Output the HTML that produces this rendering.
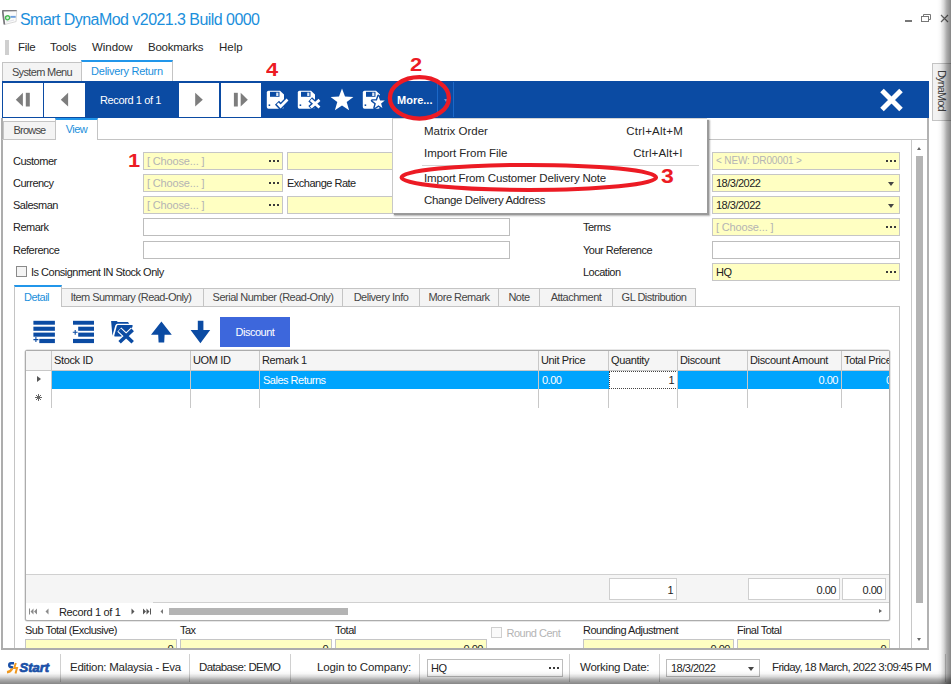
<!DOCTYPE html>
<html><head><meta charset="utf-8"><title>Smart DynaMod</title>
<style>
*{box-sizing:border-box;margin:0;padding:0}
html,body{width:951px;height:684px;overflow:hidden;background:#fff}
body{position:relative;font-family:"Liberation Sans",sans-serif;font-size:11px;color:#222;letter-spacing:-0.5px}
.a{position:absolute}
.t{position:absolute;white-space:nowrap;line-height:14px}
.m{font-size:11.500px;color:#262626;letter-spacing:-0.26px}
.y{position:absolute;background:#ffffc2;border:1px solid #c6c6c6;height:18px}
.w{position:absolute;background:#fff;border:1px solid #bdbdbd;height:18px}
.ph{color:#b4b4b4;letter-spacing:-0.15px}
.dots{position:absolute;right:11px;top:7px;width:2px;height:2px;background:#3a3a3a;box-shadow:4px 0 #3a3a3a,8px 0 #3a3a3a;font-size:0;overflow:hidden}
.dd{position:absolute;right:5px;top:7px;width:0;height:0;border-left:3.5px solid transparent;border-right:3.5px solid transparent;border-top:4px solid #444}
.tab{position:absolute;background:#f4f4f4;border:1px solid #c4c4c4;border-bottom:none;height:18px;line-height:16px;text-align:center;white-space:nowrap;color:#454545}
.nb{position:absolute;top:82.500px;height:34px;background:#fff}
.red{color:#ec1b24;font-weight:bold;font-size:19px;position:absolute;line-height:18px;letter-spacing:0;transform:scaleX(1.15);transform-origin:0 0}
.gh{position:absolute;top:351px;height:19px;border-right:1px solid #c8c8c8;background:#f5f5f5;line-height:18px;padding-left:2px;white-space:nowrap;overflow:hidden;color:#222;letter-spacing:-0.35px}
.vl{position:absolute;width:1px;background:#c8c8c8}
.sep{position:absolute;top:654px;width:1px;height:28px;background:#d0d0d0}
</style></head><body>

<!-- title -->
<svg class="a" style="left:2px;top:10px" width="16" height="16" viewBox="0 0 16 16"><path d="M.4 .7 L14.700 .5 L14.100 11.600 L2.300 14.600 Z" fill="#fbfbfb" stroke="#cfcfcf" stroke-width=".8"/><path d="M.3 .8 L14.700 .6" stroke="#7c7c80" stroke-width="1.500" fill="none"/><path d="M.600 .6 L2.400 14.500" stroke="#77777c" stroke-width="1.700" fill="none"/><ellipse cx="5.600" cy="7.800" rx="2.100" ry="2" fill="#d8f0da" stroke="#43b84f" stroke-width="1.300" transform="rotate(-20 5.600 7.800)"/><rect x="8.400" y="5.900" width="5.300" height="1.900" fill="#4c8ad6" opacity=".8"/><path d="M4 12 L12 10" stroke="#e2e2e8" stroke-width="1"/></svg>
<div class="t" style="left:20px;top:8.500px;font-size:16px;line-height:22px;color:#1b8fdc;letter-spacing:-0.55px">Smart DynaMod v2021.3 Build 0000</div>
<!-- window controls -->
<div class="a" style="left:905px;top:20px;width:7px;height:2px;background:#777"></div>
<svg class="a" style="left:920px;top:13px" width="12" height="10" viewBox="0 0 12 10"><path d="M3.5 3.5 V1.5 H10.5 V6.5 H8.5" fill="none" stroke="#777" stroke-width="1"/><rect x="1.5" y="3.5" width="7" height="5" fill="none" stroke="#777" stroke-width="1"/></svg>
<svg class="a" style="left:940px;top:14px" width="9" height="9" viewBox="0 0 9 9"><path d="M1 1 L8 8 M8 1 L1 8" stroke="#666" stroke-width="1.2"/></svg>

<!-- menu bar -->
<div class="a" style="left:5px;top:40px;width:4px;height:15px;background:#cfcfcf"></div>
<div class="t m" style="left:18px;top:40px">File</div>
<div class="t m" style="left:50px;top:40px;letter-spacing:-0.1px">Tools</div>
<div class="t m" style="left:92px;top:40px;letter-spacing:-0.05px">Window</div>
<div class="t m" style="left:148px;top:40px">Bookmarks</div>
<div class="t m" style="left:219px;top:40px;letter-spacing:0">Help</div>

<!-- document tabs -->
<div class="tab" style="left:2px;top:62px;width:80px;height:20px;line-height:19px;letter-spacing:-0.65px">System Menu</div>
<div class="tab" style="left:81px;top:59.500px;width:92px;height:22.500px;background:#fff;border-top:2px solid #2196ea;color:#1b8fdc;line-height:19px;letter-spacing:-0.27px">Delivery Return</div>

<!-- blue toolbar -->
<div class="a" style="left:2px;top:81px;width:926.500px;height:36.500px;background:#0b4ba3"></div>
<div class="nb" style="left:3px;width:39.500px"></div>
<div class="nb" style="left:44.400px;width:40.200px"></div>
<div class="nb" style="left:179px;width:40px"></div>
<div class="nb" style="left:221px;width:40px"></div>
<svg class="a" style="left:0;top:82px" width="262" height="35" viewBox="0 82 262 35"><g fill="#7d7d7d"><path d="M22.900 92.800 V106.500 L15.800 99.650Z"/><rect x="25.800" y="92.800" width="4" height="13.700"/><path d="M68.100 92.800 V106.500 L60.800 99.650Z"/><path d="M195.200 92.800 V106.500 L202.800 99.650Z"/><rect x="233.900" y="92.800" width="3.900" height="13.700"/><path d="M240.700 92.800 V106.500 L247.800 99.650Z"/></g></svg>
<div class="t" style="left:83.500px;top:93px;width:94px;text-align:center;color:#fff;letter-spacing:-0.4px">Record 1 of 1</div>


<!-- toolbar icons -->
<svg class="a" style="left:266px;top:90px" width="24" height="20" viewBox="0 0 24 20"><path d="M2.5 .8 H14 L18 4.5 V17 Q18 18.8 16.2 18.8 H2.5 Q.8 18.8 .8 17 V2.5 Q.8 .8 2.5 .8Z" fill="#fff"/><rect x="4" y="1.8" width="9.5" height="5" fill="#0b4ba3"/><rect x="10.2" y="2.6" width="2.2" height="3.4" fill="#dfe8f5"/><rect x="2.6" y="14.4" width="1.6" height="1.6" fill="#0b4ba3"/><path d="M11 12.800 L14.600 16.600 L22.200 8.800" fill="none" stroke="#0b4ba3" stroke-width="5.600"/><path d="M11.600 13.400 L14.600 16.500 L21.500 9.500" fill="none" stroke="#fff" stroke-width="2.700"/></svg>
<svg class="a" style="left:297px;top:90px" width="24" height="20" viewBox="0 0 24 20"><path d="M2.5 .8 H14 L18 4.5 V17 Q18 18.8 16.2 18.8 H2.5 Q.8 18.8 .8 17 V2.5 Q.8 .8 2.5 .8Z" fill="#fff"/><rect x="4" y="1.8" width="9.5" height="5" fill="#0b4ba3"/><rect x="10.2" y="2.6" width="2.2" height="3.4" fill="#dfe8f5"/><rect x="2.6" y="14.4" width="1.6" height="1.6" fill="#0b4ba3"/><path d="M13.200 9.300 L23 18 M23 9.300 L13.200 18" fill="none" stroke="#0b4ba3" stroke-width="5.600"/><path d="M13.800 9.900 L22.500 17.500 M22.500 9.900 L13.800 17.500" fill="none" stroke="#fff" stroke-width="2.800"/></svg>
<svg class="a" style="left:330px;top:88px" width="24" height="23" viewBox="0 0 24 23"><path d="M12 .6 L15 8.6 L23.4 8.9 L16.7 14.1 L19.1 22.2 L12 17.5 L4.9 22.2 L7.3 14.1 L.6 8.9 L9 8.6 Z" fill="#fff"/></svg>
<svg class="a" style="left:362px;top:90px" width="25" height="20" viewBox="0 0 25 20"><path d="M2.5 .8 H14 L18 4.5 V17 Q18 18.8 16.2 18.8 H2.5 Q.8 18.8 .8 17 V2.5 Q.8 .8 2.5 .8Z" fill="#fff"/><rect x="4" y="1.8" width="9.5" height="5" fill="#0b4ba3"/><rect x="10.2" y="2.6" width="2.2" height="3.4" fill="#dfe8f5"/><rect x="2.6" y="14.4" width="1.6" height="1.6" fill="#0b4ba3"/><path d="M16.5 6.0 L18.1 10.4 L22.8 10.6 L19.1 13.4 L20.4 17.9 L16.5 15.3 L12.6 17.9 L13.9 13.4 L10.2 10.6 L14.9 10.4 Z" fill="#0b4ba3" stroke="#0b4ba3" stroke-width="2.800" stroke-linejoin="round"/><path d="M16.5 6.0 L18.1 10.4 L22.8 10.6 L19.1 13.4 L20.4 17.9 L16.5 15.3 L12.6 17.9 L13.9 13.4 L10.2 10.6 L14.9 10.4 Z" fill="#fff"/></svg>
<div class="t" style="left:397px;top:93px;color:#fff;font-weight:bold;letter-spacing:0">More...</div>
<div class="a" style="left:437px;top:82px;width:1px;height:35px;background:#1c68c8"></div>
<div class="a" style="left:453px;top:82px;width:1px;height:35px;background:#1c68c8"></div>
<div class="a" style="left:444px;top:99px;width:0;height:0;border-left:2.5px solid transparent;border-right:2.5px solid transparent;border-top:3px solid #6f94cf"></div>
<svg class="a" style="left:879px;top:88px" width="25" height="24" viewBox="0 0 25 24"><path d="M3 2.5 L22 21.5 M22 2.5 L3 21.5" stroke="#fff" stroke-width="5"/></svg>

<!-- DynaMod side tab -->
<div class="a" style="left:931.500px;top:63px;width:20px;height:58px;background:#f2f2f2;border:1px solid #c4c4c4"></div>
<div class="t" style="left:949px;top:69.500px;transform-origin:0 0;transform:rotate(90deg);color:#444;letter-spacing:-0.9px">DynaMod</div>

<!-- Browse / View tabs and main panel -->
<div class="a" style="left:1.300px;top:117.500px;width:1.400px;height:532px;background:#adadad"></div><div class="a" style="left:2px;top:139px;width:926px;height:1px;background:#c4c4c4"></div>
<div class="tab" style="left:3px;top:121px;width:53px;height:19px;line-height:16px;border-bottom:1px solid #c4c4c4;letter-spacing:-0.8px">Browse</div>
<div class="tab" style="left:55px;top:118px;width:43px;height:22px;background:#fff;border-top:2px solid #2196ea;color:#1b8fdc;line-height:19px">View</div>


<!-- form labels -->
<div class="t" style="left:13px;top:154px">Customer</div>
<div class="t" style="left:13px;top:176px">Currency</div>
<div class="t" style="left:13px;top:198px">Salesman</div>
<div class="t" style="left:13px;top:220px">Remark</div>
<div class="t" style="left:13px;top:243px">Reference</div>
<div class="a" style="left:16px;top:266px;width:11px;height:11px;border:1px solid #8a8a8a;background:#f4f4f4"></div>
<div class="t" style="left:31px;top:265px">Is Consignment IN Stock Only</div>
<div class="t" style="left:287px;top:176px">Exchange Rate</div>
<div class="t" style="left:583px;top:220px">Terms</div>
<div class="t" style="left:583px;top:243px">Your Reference</div>
<div class="t" style="left:583px;top:265px">Location</div>
<!-- left fields -->
<div class="y" style="left:143px;top:152px;width:140px"><span class="t ph" style="left:3px;top:1px">[ Choose... ]</span><span class="dots">...</span></div>
<div class="y" style="left:143px;top:174px;width:140px"><span class="t ph" style="left:3px;top:1px">[ Choose... ]</span><span class="dots">...</span></div>
<div class="y" style="left:143px;top:196px;width:140px"><span class="t ph" style="left:3px;top:1px">[ Choose... ]</span><span class="dots">...</span></div>
<div class="y" style="left:287px;top:152px;width:223px"></div>
<div class="y" style="left:287px;top:196px;width:223px"></div>
<div class="w" style="left:143px;top:218px;width:367px"></div>
<div class="w" style="left:143px;top:241px;width:367px"></div>
<!-- right fields -->
<div class="y" style="left:712px;top:152px;width:188px"><span class="t ph" style="left:3px;top:1px;font-size:10px">&lt; NEW: DR00001 &gt;</span><span class="dots">...</span></div>
<div class="y" style="left:712px;top:174px;width:188px"><span class="t" style="left:3px;top:1px">18/3/2022</span><span class="dd"></span></div>
<div class="y" style="left:712px;top:196px;width:188px"><span class="t" style="left:3px;top:1px">18/3/2022</span><span class="dd"></span></div>
<div class="y" style="left:712px;top:218px;width:188px"><span class="t ph" style="left:3px;top:1px">[ Choose... ]</span><span class="dots">...</span></div>
<div class="w" style="left:712px;top:241px;width:188px"></div>
<div class="y" style="left:712px;top:263px;width:188px"><span class="t" style="left:3px;top:1px">HQ</span><span class="dots">...</span></div>
<!-- vertical scrollbar -->
<div class="vl" style="left:911px;top:140px;height:508px"></div>
<div class="a" style="left:927.300px;top:117.500px;width:1.400px;height:532px;background:#b2b2b2"></div>
<div class="a" style="left:916px;top:156px;width:7px;height:447px;background:#b4b4b4"></div>
<div class="a" style="left:917px;top:147px;width:0;height:0;border-left:2.5px solid transparent;border-right:2.5px solid transparent;border-bottom:3px solid #666"></div>
<div class="a" style="left:917px;top:638px;width:0;height:0;border-left:2.5px solid transparent;border-right:2.5px solid transparent;border-top:3px solid #666"></div>


<!-- detail tab panel -->
<div class="a" style="left:14px;top:306px;width:886px;height:343px;border:1px solid #c4c4c4;border-bottom:none;background:#fff"></div>
<div class="tab" style="left:14px;top:284.500px;width:48px;height:22.500px;background:#fff;border-top:2px solid #2196ea;color:#1b8fdc;line-height:20px;text-indent:-3px">Detail</div>
<div class="tab" style="left:61px;top:288px;width:143px;letter-spacing:-0.57px;text-indent:-3px">Item Summary (Read-Only)</div>
<div class="tab" style="left:203px;top:288px;width:140px">Serial Number (Read-Only)</div>
<div class="tab" style="left:342px;top:288px;width:78px">Delivery Info</div>
<div class="tab" style="left:419px;top:288px;width:80px">More Remark</div>
<div class="tab" style="left:498px;top:288px;width:42px">Note</div>
<div class="tab" style="left:539px;top:288px;width:74px">Attachment</div>
<div class="tab" style="left:612px;top:288px;width:84px">GL Distribution</div>
<!-- grid toolbar icons -->
<svg class="a" style="left:33px;top:320px" width="180" height="24" viewBox="0 0 180 24">
<g fill="#0b4ba3">
<rect x=".4" y=".8" width="21.5" height="3.9"/><rect x=".4" y="6.7" width="21.5" height="4.1"/><rect x=".4" y="12.6" width="21.5" height="4.1"/><rect x="6.3" y="18.9" width="15.6" height="4.2"/><path d="M.4 19.6 H5.4 M2.9 17.1 V22.100" stroke="#0b4ba3" stroke-width="1.100" fill="none"/>
<rect x="40" y=".8" width="21" height="3.9"/><rect x="45.2" y="6.7" width="15.8" height="4.1"/><rect x="45.2" y="12.6" width="15.8" height="4.1"/><rect x="40" y="18.9" width="21" height="4.200"/><path d="M39.800 12.300 H44.600 M42.200 9.900 V14.700" stroke="#0b4ba3" stroke-width="1.100" fill="none"/>
<path d="M78.100 .9 H83.700 L84.800 2.100 H95 L96.200 3.700 H84.600 Q82.800 3.700 82.300 5.500 L79.400 15.800 Z"/><path d="M85 5 H99 Q100 5 99.600 6.200 L96 16.600 H82 Q81 16.600 81.300 15.500 L83.800 6 Q84.100 5 85 5 Z"/><path d="M86.300 9.600 L100 22.500 M100 9.600 L86.300 22.500" stroke="#fff" stroke-width="5.800" fill="none"/><path d="M86.600 9.900 L99.700 22.200 M99.700 9.900 L86.600 22.200" stroke="#0b4ba3" stroke-width="3.600" fill="none"/>
<path d="M128.400 1.500 L138.800 14.800 H131.600 L131.200 22.500 H125.600 L125.200 14.800 H118 Z"/>
<path d="M167.400 23.200 L177.200 10 H170.400 V.8 H164.800 V10 H157.600 Z"/>
</g></svg>
<div class="a" style="left:220px;top:317px;width:70px;height:30px;background:#3d67dc;color:#fff;text-align:center;line-height:30px">Discount</div>
<!-- grid -->
<div class="a" style="left:24.500px;top:350px;width:865px;height:270.500px;border:1px solid #acacac;border-radius:2px;background:#fff;box-shadow:0 0 0 .5px #d0d0d0"></div>
<div class="gh" style="left:26px;width:26px"></div>
<div class="gh" style="left:52px;width:139px">Stock ID</div>
<div class="gh" style="left:191px;width:69px">UOM ID</div>
<div class="gh" style="left:260px;width:279px">Remark 1</div>
<div class="gh" style="left:539px;width:70px">Unit Price</div>
<div class="gh" style="left:609px;width:69px">Quantity</div>
<div class="gh" style="left:678px;width:70px">Discount</div>
<div class="gh" style="left:748px;width:94px">Discount Amount</div>
<div class="gh" style="left:842px;width:47px;border-right:none">Total Price</div>
<div class="a" style="left:26px;top:370px;width:863px;height:1px;background:#c8c8c8"></div>
<div class="a" style="left:52px;top:371px;width:837px;height:18px;background:#00a4fd"></div>
<div class="a" style="left:609px;top:371px;width:69px;height:18px;background:#fff;border:1px dotted #444"></div>
<div class="t" style="left:263px;top:373px;color:#fff">Sales Returns</div>
<div class="t" style="left:542px;top:373px;color:#fff">0.00</div>
<div class="t" style="left:640px;top:373px;width:34px;text-align:right">1</div>
<div class="t" style="left:800px;top:373px;width:38px;text-align:right;color:#fff">0.00</div>
<div class="t" style="left:886px;top:373px;color:#fff;width:3px;overflow:hidden">0</div>
<div class="vl" style="left:51px;top:371px;height:37px"></div>
<div class="vl" style="left:190px;top:371px;height:37px"></div>
<div class="vl" style="left:259px;top:371px;height:37px"></div>
<div class="vl" style="left:538px;top:371px;height:37px"></div>
<div class="vl" style="left:608px;top:389px;height:19px"></div>
<div class="vl" style="left:677px;top:371px;height:37px"></div>
<div class="vl" style="left:747px;top:371px;height:37px"></div>
<div class="vl" style="left:841px;top:371px;height:37px"></div>
<div class="a" style="left:37px;top:376px;width:0;height:0;border-top:3.5px solid transparent;border-bottom:3.5px solid transparent;border-left:4px solid #555"></div>
<svg class="a" style="left:34px;top:393px" width="9" height="9" viewBox="0 0 9 9"><path d="M4.500 1 V8 M1 4.500 H8 M2 2 L7 7 M7 2 L2 7" stroke="#666" stroke-width="1" fill="none"/></svg>
<!-- grid footer -->
<div class="a" style="left:26px;top:574px;width:863px;height:29px;background:#f5f5f5;border-top:1px solid #d0d0d0"></div><div class="a" style="left:153px;top:602px;width:736px;height:1px;background:#d0d0d0"></div>
<div class="w" style="left:609px;top:578px;width:68px;height:22px;border-color:#cfcfcf"><span class="t" style="right:3px;top:4px">1</span></div>
<div class="w" style="left:748px;top:578px;width:92px;height:22px;border-color:#cfcfcf"><span class="t" style="right:3px;top:4px">0.00</span></div>
<div class="w" style="left:842px;top:578px;width:44px;height:22px;border-color:#cfcfcf"><span class="t" style="right:3px;top:4px">0.00</span></div>
<!-- grid navigator -->
<svg class="a" style="left:28px;top:607px" width="140" height="9" viewBox="0 0 140 9"><g fill="#8a8a8a"><rect x="1" y="1.500" width="1" height="6"/><path d="M5.500 1.500 V7.500 L2.500 4.500Z M9 1.500 V7.500 L6 4.500Z"/><path d="M20.500 1.500 V7.500 L17.500 4.500Z"/></g><g fill="#555"><path d="M103.500 1.500 V7.500 L106.500 4.500Z"/><path d="M115 1.500 V7.500 L118 4.500Z M118.500 1.500 V7.500 L121.500 4.500Z"/><rect x="122" y="1.500" width="1" height="6"/></g><path d="M135 2 V7 L132.500 4.500Z" fill="#777"/></svg>
<div class="t" style="left:59px;top:604.500px;letter-spacing:-0.35px">Record 1 of 1</div>
<div class="a" style="left:169px;top:608px;width:179px;height:7px;background:#b4b4b4"></div>
<div class="a" style="left:879px;top:609px;width:0;height:0;border-top:2.5px solid transparent;border-bottom:2.5px solid transparent;border-left:3px solid #666"></div>
<!-- totals -->
<div class="t" style="left:25px;top:623px">Sub Total (Exclusive)</div>
<div class="t" style="left:180px;top:623px">Tax</div>
<div class="t" style="left:335px;top:623px">Total</div>
<div class="a" style="left:491px;top:627px;width:11px;height:11px;border:1px solid #cfcfcf;background:#fafafa"></div>
<div class="t" style="left:506.500px;top:626px;color:#b4b4b4">Round Cent</div>
<div class="t" style="left:583px;top:623px">Rounding Adjustment</div>
<div class="t" style="left:737px;top:623px">Final Total</div>
<div class="y" style="left:25px;top:639px;width:152px"><span class="t" style="right:3px;top:1.500px">0</span></div>
<div class="y" style="left:180px;top:639px;width:152px"><span class="t" style="right:3px;top:1.500px">0</span></div>
<div class="y" style="left:335px;top:639px;width:152px"><span class="t" style="right:3px;top:1.500px">0.00</span></div>
<div class="y" style="left:583px;top:639px;width:151px"><span class="t" style="right:3px;top:1.500px">0.00</span></div>
<div class="y" style="left:737px;top:639px;width:153px"><span class="t" style="right:3px;top:1.500px">0</span></div>


<!-- dropdown menu -->
<div class="a" style="left:392px;top:118px;width:315px;height:94.500px;background:#fff;border-left:1px solid #c8c8c8;border-top:1px solid #d4d4d4;box-shadow:2px 2px 0 0 #9a9a9a,2.500px 2.500px 1.500px .5px rgba(0,0,0,.3)"></div>
<div class="t m" style="left:424px;top:124px;letter-spacing:0">Matrix Order</div>
<div class="t m" style="left:424px;top:146px;letter-spacing:-0.06px">Import From File</div>
<div class="t m" style="left:424px;top:171px;letter-spacing:-0.17px">Import From Customer Delivery Note</div>
<div class="t m" style="left:424px;top:193px;letter-spacing:-0.38px">Change Delivery Address</div>
<div class="t m" style="left:600px;top:124px;width:83px;text-align:right;letter-spacing:.24px">Ctrl+Alt+M</div>
<div class="t m" style="left:600px;top:146px;width:82.500px;text-align:right;letter-spacing:.14px">Ctrl+Alt+I</div>
<div class="a" style="left:422px;top:165px;width:277px;height:1px;background:#d4d4d4"></div>


<!-- status bar -->
<div class="a" style="left:0;top:648px;width:951px;height:36px;background:#fff"></div><div class="a" style="left:1.300px;top:648px;width:928px;height:1.500px;background:#adadad"></div>
<svg class="a" style="left:6px;top:661px" width="14" height="14" viewBox="0 0 14 14"><path d="M8 2.200 H5 Q3.200 2.200 3.200 4.200 Q3.200 6 5.500 6.200 L7 6.500" fill="none" stroke="#1a50a8" stroke-width="2.400"/><path d="M1 11.300 Q4.500 11 6.200 7.500" fill="none" stroke="#f39a1e" stroke-width="2.400"/><path d="M9.800 2 L8.200 7 H11 L9.500 12.500" fill="none" stroke="#f39a1e" stroke-width="2"/></svg>
<div class="t" style="left:19.500px;top:660.500px;font-size:13px;font-weight:bold;font-style:italic;color:#1a50a8;letter-spacing:0;-webkit-text-stroke:0.7px #1a50a8">Start</div>
<div class="sep" style="left:60px"></div>
<div class="t m" style="left:70px;top:660px">Edition: Malaysia - Eva</div>
<div class="sep" style="left:189px"></div>
<div class="t m" style="left:199px;top:660px;letter-spacing:-0.62px">Database: DEMO</div>
<div class="sep" style="left:290px"></div>
<div class="t m" style="left:317px;top:660px;letter-spacing:-0.14px">Login to Company:</div>
<div class="sep" style="left:419px"></div>
<div class="w" style="left:427px;top:659px;width:136px"><span class="t" style="left:3px;top:1px">HQ</span><span class="dots">...</span></div>
<div class="sep" style="left:569px"></div>
<div class="t m" style="left:580px;top:660px">Working Date:</div>
<div class="sep" style="left:659px"></div>
<div class="w" style="left:666px;top:659px;width:94px"><span class="t" style="left:4px;top:1px">18/3/2022</span><span class="dd"></span></div>
<div class="sep" style="left:945px"></div>
<div class="t m" style="left:772px;top:660px;letter-spacing:-0.62px">Friday, 18 March, 2022 3:09:45 PM</div>


<!-- red annotations -->
<div class="red" style="left:127.500px;top:151.500px">1</div>
<div class="red" style="left:410px;top:56px">2</div>
<div class="red" style="left:661px;top:166.500px;font-size:20px">3</div>
<div class="red" style="left:266px;top:61px">4</div>
<svg class="a" style="left:380px;top:70px" width="80" height="60" viewBox="0 0 80 60"><ellipse cx="39.400" cy="27.900" rx="29.500" ry="20.700" fill="none" stroke="#ec1b24" stroke-width="4.300"/></svg>
<svg class="a" style="left:390px;top:155px" width="280" height="46" viewBox="0 0 280 46"><ellipse cx="138.800" cy="22.400" rx="127.300" ry="12.500" fill="none" stroke="#ec1b24" stroke-width="4"/></svg>
<!-- edge shadows -->
<div class="a" style="left:937px;top:0;width:14px;height:684px;background:linear-gradient(to right,rgba(0,0,0,0),rgba(0,0,0,.03) 25%,rgba(0,0,0,.15) 48%,rgba(0,0,0,.33) 70%,rgba(0,0,0,.48))"></div>
<div class="a" style="left:0;top:670px;width:951px;height:14px;background:linear-gradient(to bottom,rgba(0,0,0,0),rgba(0,0,0,.03) 25%,rgba(0,0,0,.15) 48%,rgba(0,0,0,.33) 70%,rgba(0,0,0,.48))"></div>
</body></html>
